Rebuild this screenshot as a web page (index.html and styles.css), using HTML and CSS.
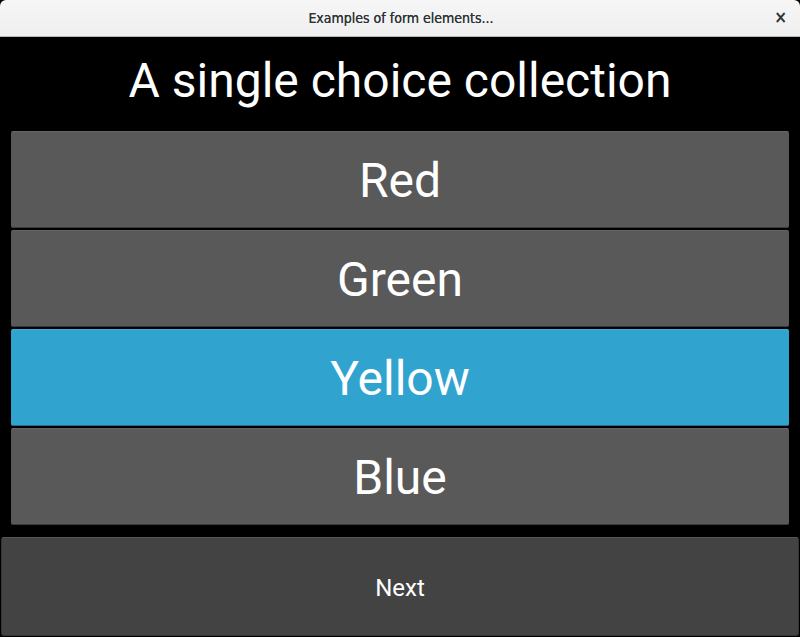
FILE: index.html
```html
<!DOCTYPE html>
<html>
<head>
<meta charset="utf-8">
<link rel="stylesheet" href="styles.css">
</head>
<body>
<div class="window">
  <header class="titlebar">
    <span class="titlebar-text">Examples of form elements...</span>
    <span class="titlebar-close">×</span>
  </header>
  <main class="content">
    <h1 class="heading">A single choice collection</h1>
    <ul class="choices">
      <li class="choice">Red</li>
      <li class="choice">Green</li>
      <li class="choice choice-selected">Yellow</li>
      <li class="choice">Blue</li>
    </ul>
    <div class="footer">
      <button class="next-button">Next</button>
    </div>
  </main>
</div>
</body>
</html>
```
FILE: styles.css
```css
* { box-sizing: border-box; }
html, body { margin: 0; padding: 0; background: #000; }
body { width: 800px; height: 637px; overflow: hidden; }
.window { display: flex; flex-direction: column; height: 637px; }
.titlebar {
  height: 37px;
  flex: 0 0 37px;
  background: linear-gradient(#f6f6f6, #efefef);
  border-bottom: 1px solid #b8b8b8;
  border-radius: 6px 6px 0 0;
  display: flex;
  align-items: center;
  justify-content: center;
  position: relative;
  font-family: "DejaVu Sans Condensed", "DejaVu Sans", sans-serif;
  font-size: 14px;
  color: #2e3436;
}
.titlebar-text { font-weight: 400; padding-left: 2px; text-shadow: 0 0 0.3px #2e3436; }
.titlebar-close {
  position: absolute;
  right: 13px;
  top: 9px;
  font-size: 17px;
  font-weight: bold;
  color: #2e3436;
  line-height: 17px;
}
.content {
  flex: 1;
  display: flex;
  flex-direction: column;
  font-family: Roboto, "Liberation Sans", sans-serif;
  color: #fff;
}
.heading {
  margin: 0;
  height: 93px;
  display: flex;
  align-items: center;
  justify-content: center;
  font-weight: 400;
  font-size: 48px;
  padding-bottom: 6px;
}
.choices {
  list-style: none;
  margin: 0;
  padding: 1px 11px 0 11px;
  display: flex;
  flex-direction: column;
  gap: 2px;
}
.choice {
  height: 97px;
  background: #595959;
  border-top: 1px solid #666;
  border-bottom: 1px solid #3a3a3a;
  display: flex;
  align-items: center;
  justify-content: center;
  font-size: 48px;
  border-radius: 2px;
  padding-top: 2px;
}
.choice-selected {
  background: #31a3cf;
  border-top-color: #3bb0db;
  border-bottom-color: #2a6b85;
}
.footer {
  padding: 12px 1px 1px 1px;
  display: flex;
}
.next-button {
  flex: 1;
  height: 99px;
  background: #434343;
  border: 1px solid #363636;
  border-top-color: #555;
  border-radius: 3px;
  color: #fff;
  font-family: Roboto, "Liberation Sans", sans-serif;
  font-size: 24px;
  padding: 3px 0 0 0;
}
```
